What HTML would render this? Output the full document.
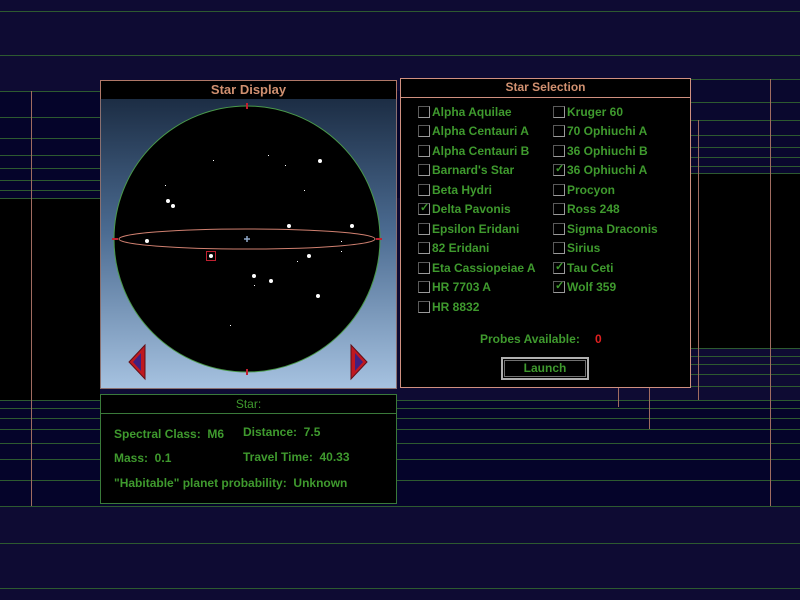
<!DOCTYPE html>
<html><head><style>
body{margin:0;width:800px;height:600px;background:#0e0b33;position:relative;overflow:hidden;font-family:"Liberation Sans",sans-serif;}
.a{position:absolute}
.h{position:absolute;height:1px;background:#2d5a30}
.v{position:absolute;width:1px;background:#a06c60}
.t{position:absolute;font-size:12px;font-weight:bold;color:#3f9a2e;white-space:nowrap;line-height:14px}
.cb{position:absolute;width:10px;height:10px;border:1px solid #5a5a5a;border-right-color:#9a9a9a;border-bottom-color:#9a9a9a;background:#000}
.ck{position:absolute;left:1px;top:-3px;font-size:11px;color:#3f9a2e;font-weight:bold}
</style></head><body>
<div class="a" style="left:0;top:91px;width:800px;height:107px;background:#05042a"></div>
<div class="a" style="left:0;top:198px;width:100px;height:202px;background:#000"></div>
<div class="a" style="left:0;top:400px;width:800px;height:106px;background:#05042a"></div>
<div class="a" style="left:690px;top:173px;width:110px;height:175px;background:#000"></div>
<div class="a" style="left:690px;top:79px;width:110px;height:94px;background:#0a082e"></div>
<div class="h" style="left:0;top:11px;width:800px"></div>
<div class="h" style="left:0;top:55px;width:800px"></div>
<div class="h" style="left:0;top:91px;width:100px"></div>
<div class="h" style="left:0;top:117px;width:100px"></div>
<div class="h" style="left:0;top:138px;width:100px"></div>
<div class="h" style="left:0;top:155px;width:100px"></div>
<div class="h" style="left:0;top:168px;width:100px"></div>
<div class="h" style="left:0;top:180px;width:100px"></div>
<div class="h" style="left:0;top:190px;width:100px"></div>
<div class="h" style="left:0;top:198px;width:100px"></div>
<div class="h" style="left:0;top:400px;width:800px"></div>
<div class="h" style="left:0;top:408px;width:800px"></div>
<div class="h" style="left:0;top:418px;width:800px"></div>
<div class="h" style="left:0;top:429px;width:800px"></div>
<div class="h" style="left:0;top:443px;width:800px"></div>
<div class="h" style="left:0;top:459px;width:800px"></div>
<div class="h" style="left:0;top:480px;width:800px"></div>
<div class="h" style="left:0;top:506px;width:800px"></div>
<div class="h" style="left:0;top:543px;width:800px"></div>
<div class="h" style="left:0;top:588px;width:800px"></div>
<div class="h" style="left:690px;top:79px;width:110px"></div>
<div class="h" style="left:690px;top:102px;width:110px"></div>
<div class="h" style="left:690px;top:120px;width:110px"></div>
<div class="h" style="left:690px;top:135px;width:110px"></div>
<div class="h" style="left:690px;top:147px;width:110px"></div>
<div class="h" style="left:690px;top:157px;width:110px"></div>
<div class="h" style="left:690px;top:166px;width:110px"></div>
<div class="h" style="left:690px;top:173px;width:110px"></div>
<div class="h" style="left:400px;top:348px;width:400px"></div>
<div class="h" style="left:400px;top:356px;width:400px"></div>
<div class="h" style="left:400px;top:364px;width:400px"></div>
<div class="h" style="left:400px;top:374px;width:400px"></div>
<div class="h" style="left:400px;top:386px;width:400px"></div>
<div class="v" style="left:31px;top:91px;height:415px"></div>
<div class="v" style="left:698px;top:120px;height:280px"></div>
<div class="v" style="left:770px;top:79px;height:427px"></div>
<div class="v" style="left:618px;top:387px;height:20px"></div>
<div class="v" style="left:649px;top:387px;height:42px"></div>

<div class="a" style="left:100px;top:80px;width:295px;height:18px;background:#000;border:1px solid #b07868;color:#d09070;font-size:13px;font-weight:bold;text-align:center;line-height:18px">Star Display</div>
<div class="a" style="left:100px;top:99px;width:295px;height:289px;border:1px solid #8a7070;border-top:none;background:linear-gradient(#1c2d44,#4a6a90 45%,#a6c2e0)"></div>
<svg class="a" style="left:0;top:0" width="800" height="600">
<circle cx="247" cy="239" r="133" fill="#000" stroke="#4a9a4a" stroke-width="1"/>
<ellipse cx="247" cy="239" rx="128" ry="10" fill="none" stroke="#d08070" stroke-width="1"/>
<line x1="247" y1="103" x2="247" y2="109" stroke="#c02030" stroke-width="2"/>
<line x1="247" y1="369" x2="247" y2="375" stroke="#c02030" stroke-width="2"/>
<line x1="112" y1="239" x2="118" y2="239" stroke="#c02030" stroke-width="2"/>
<line x1="376" y1="239" x2="382" y2="239" stroke="#c02030" stroke-width="2"/>
<path d="M244 239h6M247 236v6" stroke="#8fa8c8" stroke-width="1.5"/>
<g fill="#fff">
<circle cx="320" cy="161" r="2"/><circle cx="168" cy="201" r="2"/><circle cx="173" cy="206" r="2"/>
<circle cx="289" cy="226" r="2"/><circle cx="352" cy="226" r="2"/><circle cx="147" cy="241" r="2"/>
<circle cx="211" cy="256" r="2"/><circle cx="309" cy="256" r="2"/><circle cx="254" cy="276" r="2"/>
<circle cx="271" cy="281" r="2"/><circle cx="318" cy="296" r="2"/>
<rect x="213" y="160" width="1" height="1"/><rect x="268" y="155" width="1" height="1"/><rect x="285" y="165" width="1" height="1"/>
<rect x="304" y="190" width="1" height="1"/><rect x="165" y="185" width="1" height="1"/><rect x="297" y="261" width="1" height="1"/>
<rect x="341" y="241" width="1" height="1"/><rect x="341" y="251" width="1" height="1"/><rect x="254" y="285" width="1" height="1"/><rect x="230" y="325" width="1" height="1"/>
</g>
<rect x="206.5" y="251.5" width="9" height="9" fill="none" stroke="#c02030"/>
<path d="M145 345 L129 362 L145 379 Z" fill="#c01820" stroke="#601018"/>
<path d="M141 353 L133 362 L141 371 Z" fill="#402080"/>
<path d="M351 345 L367 362 L351 379 Z" fill="#c01820" stroke="#601018"/>
<path d="M355 353 L363 362 L355 371 Z" fill="#402080"/>
</svg>

<div class="a" style="left:100px;top:394px;width:295px;height:108px;background:#000;border:1px solid #3a7a3a"></div>
<div class="a" style="left:101px;top:413px;width:295px;height:1px;background:#3a7a3a"></div>
<div class="t" style="left:100px;top:397px;width:297px;text-align:center;font-weight:normal">Star:</div>
<div class="t" style="left:114px;top:427px">Spectral Class:&nbsp; M6</div>
<div class="t" style="left:243px;top:425px">Distance:&nbsp; 7.5</div>
<div class="t" style="left:114px;top:451px">Mass:&nbsp; 0.1</div>
<div class="t" style="left:243px;top:450px">Travel Time:&nbsp; 40.33</div>
<div class="t" style="left:114px;top:476px">"Habitable" planet probability:&nbsp; Unknown</div>

<div class="a" style="left:400px;top:78px;width:289px;height:308px;background:#000;border:1px solid #d09080"></div>
<div class="a" style="left:401px;top:97px;width:289px;height:1px;background:#d09080"></div>
<div class="a" style="left:400px;top:80px;width:291px;text-align:center;color:#d09070;font-size:12px;font-weight:bold">Star Selection</div>

<div class="cb" style="left:418px;top:106px"></div><div class="t" style="left:432px;top:105px">Alpha Aquilae</div>
<div class="cb" style="left:418px;top:125px"></div><div class="t" style="left:432px;top:124px">Alpha Centauri A</div>
<div class="cb" style="left:418px;top:145px"></div><div class="t" style="left:432px;top:144px">Alpha Centauri B</div>
<div class="cb" style="left:418px;top:164px"></div><div class="t" style="left:432px;top:163px">Barnard's Star</div>
<div class="cb" style="left:418px;top:184px"></div><div class="t" style="left:432px;top:183px">Beta Hydri</div>
<div class="cb" style="left:418px;top:203px"><span class="ck">✓</span></div><div class="t" style="left:432px;top:202px">Delta Pavonis</div>
<div class="cb" style="left:418px;top:223px"></div><div class="t" style="left:432px;top:222px">Epsilon Eridani</div>
<div class="cb" style="left:418px;top:242px"></div><div class="t" style="left:432px;top:241px">82 Eridani</div>
<div class="cb" style="left:418px;top:262px"></div><div class="t" style="left:432px;top:261px">Eta Cassiopeiae A</div>
<div class="cb" style="left:418px;top:281px"></div><div class="t" style="left:432px;top:280px">HR 7703 A</div>
<div class="cb" style="left:418px;top:301px"></div><div class="t" style="left:432px;top:300px">HR 8832</div>

<div class="cb" style="left:553px;top:106px"></div><div class="t" style="left:567px;top:105px">Kruger 60</div>
<div class="cb" style="left:553px;top:125px"></div><div class="t" style="left:567px;top:124px">70 Ophiuchi A</div>
<div class="cb" style="left:553px;top:145px"></div><div class="t" style="left:567px;top:144px">36 Ophiuchi B</div>
<div class="cb" style="left:553px;top:164px"><span class="ck">✓</span></div><div class="t" style="left:567px;top:163px">36 Ophiuchi A</div>
<div class="cb" style="left:553px;top:184px"></div><div class="t" style="left:567px;top:183px">Procyon</div>
<div class="cb" style="left:553px;top:203px"></div><div class="t" style="left:567px;top:202px">Ross 248</div>
<div class="cb" style="left:553px;top:223px"></div><div class="t" style="left:567px;top:222px">Sigma Draconis</div>
<div class="cb" style="left:553px;top:242px"></div><div class="t" style="left:567px;top:241px">Sirius</div>
<div class="cb" style="left:553px;top:262px"><span class="ck">✓</span></div><div class="t" style="left:567px;top:261px">Tau Ceti</div>
<div class="cb" style="left:553px;top:281px"><span class="ck">✓</span></div><div class="t" style="left:567px;top:280px">Wolf 359</div>

<div class="t" style="left:480px;top:332px">Probes Available:</div>
<div class="t" style="left:595px;top:332px;color:#e02020">0</div>
<div class="a" style="left:501px;top:357px;width:84px;height:19px;border:2px solid #b0b0b0;background:#000"></div>
<div class="a" style="left:504px;top:360px;width:80px;height:15px;border:1px solid #707070"></div>
<div class="t" style="left:501px;top:361px;width:88px;text-align:center">Launch</div>
</body></html>
